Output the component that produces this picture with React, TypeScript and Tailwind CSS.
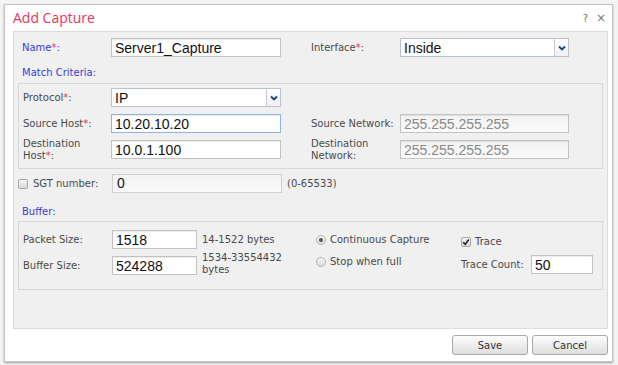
import React from "react";

const lbl = "text-[10px] text-[#4a4a4a] leading-[12px]";
const star = <span className="text-[#e8383d]">*</span>;

function TextBox({ value, w, disabled, focus }: { value: string; w: string; disabled?: boolean; focus?: boolean }) {
  return (
    <div
      className={`${w} h-[19px] shrink-0 flex items-center pl-[3px] border ${
        focus ? "border-[#8eb4e0]" : "border-[#c3c3c3]"
      } ${disabled ? "bg-gradient-to-b from-[#f2f2f2] to-[#fafafa] text-[#8a8a8a]" : "bg-white text-[#111]"} shadow-[inset_0_1px_1px_rgba(0,0,0,0.08)] text-[14px] leading-none`}
      style={{ fontFamily: '"Liberation Sans", Arial, sans-serif' }}
    >
      {value}
    </div>
  );
}

function Select({ value, w }: { value: string; w: string }) {
  return (
    <div className={`${w} h-[19px] shrink-0 flex border border-[#b9c3d0] bg-white`}>
      <div
        className="flex-1 flex items-center pl-[3px] text-[14px] leading-none text-[#111]"
        style={{ fontFamily: '"Liberation Sans", Arial, sans-serif' }}
      >
        {value}
      </div>
      <div className="w-[14px] border-l border-[#c8c8c8] flex items-center justify-center bg-gradient-to-b from-white to-[#eef0f3]">
        <svg width="8" height="6" viewBox="0 0 8 6">
          <path d="M1 1.5 L4 4.5 L7 1.5" fill="none" stroke="#1f3d7a" strokeWidth="1.8" />
        </svg>
      </div>
    </div>
  );
}

function CheckBox({ checked }: { checked?: boolean }) {
  return (
    <div className="w-[10px] h-[10px] shrink-0 rounded-[2px] border border-[#a8a8a8] bg-gradient-to-b from-[#f4f4f4] to-[#d8d8d8] flex items-center justify-center">
      {checked && (
        <svg width="8" height="8" viewBox="0 0 8 8">
          <path d="M1.2 4.2 L3.2 6.2 L6.8 1.5" fill="none" stroke="#222" strokeWidth="1.6" />
        </svg>
      )}
    </div>
  );
}

function Radio({ checked }: { checked?: boolean }) {
  return (
    <div className="w-[10px] h-[10px] shrink-0 rounded-full border border-[#b5b5b5] bg-gradient-to-b from-[#f6f6f6] to-[#dcdcdc] flex items-center justify-center">
      {checked && <div className="w-[4px] h-[4px] rounded-full bg-[#555]" />}
    </div>
  );
}

function Button({ children }: { children: React.ReactNode }) {
  return (
    <div className="w-[76px] h-[20px] rounded-[3px] border border-[#a9a9a9] bg-gradient-to-b from-[#fdfdfd] to-[#dedede] flex items-center justify-center text-[10px] text-[#333]">
      {children}
    </div>
  );
}

export default function App() {
  return (
    <div
      className="w-[618px] h-[365px] bg-[#f4f4f4] pt-[4px] pl-[4px] pr-[5px] pb-[3px]"
      style={{ fontFamily: '"DejaVu Sans", Verdana, sans-serif' }}
    >
      <div className="w-[609px] h-[358px] bg-white border border-[#c4c4c4] shadow-[0_1px_2px_rgba(0,0,0,0.35)] flex flex-col">
        {/* header */}
        <div className="h-[26px] flex items-center justify-between pl-[8px] pr-[6px]">
          <div
            className="text-[14px] text-[#e8365a] leading-none"
            style={{ fontFamily: '"Open Sans", sans-serif' }}
          >
            Add Capture
          </div>
          <div className="flex items-center gap-[8px] text-[10px] text-[#777]">
            <span>?</span>
            <span className="text-[12px]">×</span>
          </div>
        </div>

        {/* panel */}
        <div className="ml-[8px] mr-[4px] h-[298px] bg-[#f0f0f0] border border-[#dcdcdc] flex flex-col">
          {/* name row */}
          <div className="flex items-center h-[19px] mt-[6px] pl-[8px]">
            <div className="w-[89px] text-[10px] text-[#3b3bd6]">Name{star}:</div>
            <TextBox value="Server1_Capture" w="w-[170px]" />
            <div className={`w-[89px] ml-[30px] ${lbl}`}>Interface{star}:</div>
            <Select value="Inside" w="w-[169px]" />
          </div>

          <div className="pl-[8px] mt-[10px] text-[10px] text-[#3b3bd6] leading-[12px]">Match Criteria:</div>

          {/* match criteria box */}
          <div className="mx-[4px] mt-[4px] border border-[#d8d8d8] pt-[4px] pb-[9px] flex flex-col gap-[7px]">
            <div className="flex items-center h-[19px] pl-[4px]">
              <div className={`w-[88px] ${lbl}`}>Protocol{star}:</div>
              <Select value="IP" w="w-[170px]" />
            </div>
            <div className="flex items-center h-[19px] pl-[4px]">
              <div className={`w-[88px] ${lbl}`}>Source Host{star}:</div>
              <TextBox value="10.20.10.20" w="w-[170px]" focus />
              <div className={`w-[89px] ml-[30px] ${lbl}`}>Source Network:</div>
              <TextBox value="255.255.255.255" w="w-[169px]" disabled />
            </div>
            <div className="flex items-center h-[19px] pl-[4px]">
              <div className={`w-[88px] ${lbl}`}>
                Destination
                <br />
                Host{star}:
              </div>
              <TextBox value="10.0.1.100" w="w-[170px]" />
              <div className={`w-[89px] ml-[30px] ${lbl}`}>
                Destination
                <br />
                Network:
              </div>
              <TextBox value="255.255.255.255" w="w-[169px]" disabled />
            </div>
          </div>

          {/* SGT row */}
          <div className="flex items-center h-[19px] mt-[5px] pl-[4px]">
            <CheckBox />
            <div className={`w-[79px] ml-[5px] ${lbl}`}>SGT number:</div>
            <div
              className="w-[170px] h-[19px] flex items-center pl-[4px] border border-[#d0d0d0] bg-gradient-to-b from-[#f2f2f2] to-[#fafafa] text-[14px] text-[#111]"
              style={{ fontFamily: '"Liberation Sans", Arial, sans-serif' }}
            >
              0
            </div>
            <div className={`ml-[5px] ${lbl}`}>(0-65533)</div>
          </div>

          <div className="pl-[8px] mt-[13px] text-[10px] text-[#3b3bd6] leading-[12px]">Buffer:</div>

          {/* buffer box */}
          <div className="mx-[4px] mt-[3px] h-[69px] border border-[#d8d8d8] pt-[8px] flex">
            <div className="flex flex-col gap-[7px] pl-[4px] w-[297px]">
              <div className="flex items-center h-[19px]">
                <div className={`w-[89px] ${lbl}`}>Packet Size:</div>
                <TextBox value="1518" w="w-[85px]" />
                <div className={`ml-[5px] ${lbl}`}>14-1522 bytes</div>
              </div>
              <div className="flex items-center h-[19px]">
                <div className={`w-[89px] ${lbl}`}>Buffer Size:</div>
                <TextBox value="524288" w="w-[85px]" />
                <div className={`ml-[5px] ${lbl} -mt-[3px]`}>
                  1534-33554432
                  <br />
                  bytes
                </div>
              </div>
            </div>
            <div className="flex flex-col gap-[10px] pt-[4px] w-[145px]">
              <div className="flex items-center gap-[4px]">
                <Radio checked />
                <span className={lbl}>Continuous Capture</span>
              </div>
              <div className="flex items-center gap-[4px]">
                <Radio />
                <span className={lbl}>Stop when full</span>
              </div>
            </div>
            <div className="flex flex-col">
              <div className="flex items-center gap-[4px] mt-[6px]">
                <CheckBox checked />
                <span className={lbl}>Trace</span>
              </div>
              <div className="flex items-center h-[19px] mt-[7px]">
                <div className={`w-[70px] ${lbl}`}>Trace Count:</div>
                <TextBox value="50" w="w-[62px]" />
              </div>
            </div>
          </div>
        </div>

        {/* footer */}
        <div className="flex justify-end gap-[4px] mt-[6px] pr-[4px]">
          <Button>Save</Button>
          <Button>Cancel</Button>
        </div>
      </div>
    </div>
  );
}
